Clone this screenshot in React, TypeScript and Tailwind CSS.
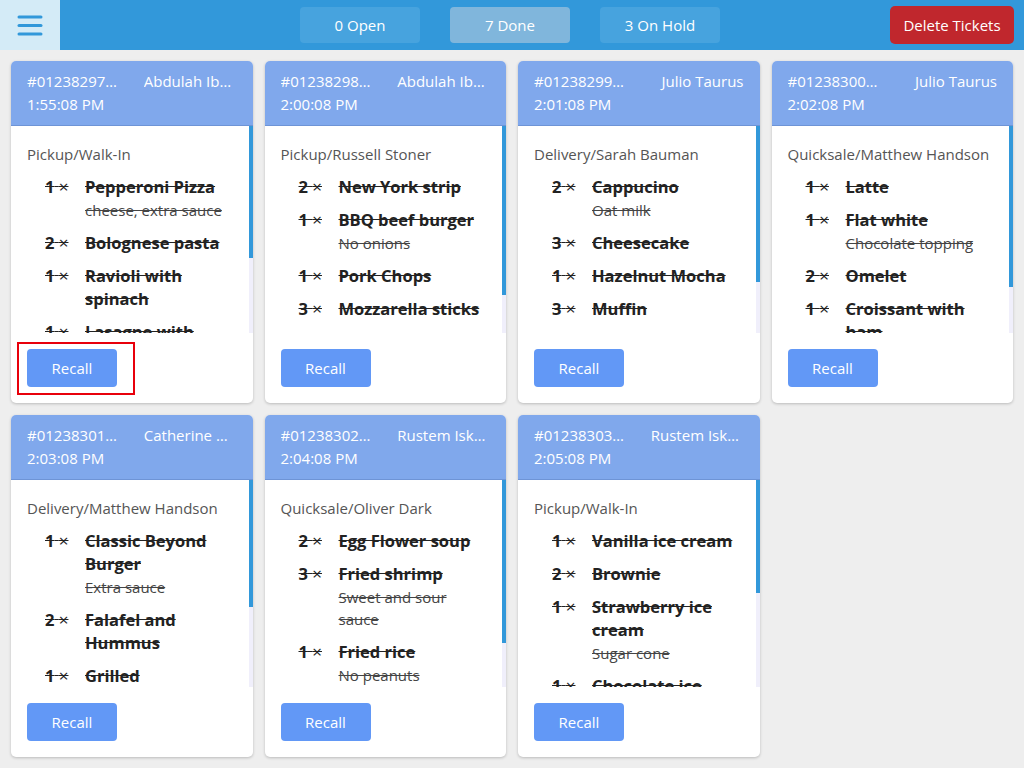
import React from 'react';

type Item = { qty: number; name: string; mods?: string };
type Ticket = { id: string; customer: string; time: string; kind: string; thumb: number; items: Item[] };

const tickets: Ticket[] = [
	{
		id: '#0123829701', customer: 'Abdulah Ibrahimov', time: '1:55:08 PM', kind: 'Pickup/Walk-In', thumb: 132,
		items: [
			{ qty: 1, name: 'Pepperoni Pizza', mods: 'cheese, extra sauce' },
			{ qty: 2, name: 'Bolognese pasta' },
			{ qty: 1, name: 'Ravioli with spinach' },
			{ qty: 1, name: 'Lasagne with meatballs', mods: 'Extra cheese' },
		],
	},
	{
		id: '#0123829802', customer: 'Abdulah Ibrahimov', time: '2:00:08 PM', kind: 'Pickup/Russell Stoner', thumb: 169,
		items: [
			{ qty: 2, name: 'New York strip' },
			{ qty: 1, name: 'BBQ beef burger', mods: 'No onions' },
			{ qty: 1, name: 'Pork Chops' },
			{ qty: 3, name: 'Mozzarella sticks' },
			{ qty: 1, name: 'Garlic bread' },
		],
	},
	{
		id: '#0123829903', customer: 'Julio Taurus', time: '2:01:08 PM', kind: 'Delivery/Sarah Bauman', thumb: 156,
		items: [
			{ qty: 2, name: 'Cappucino', mods: 'Oat milk' },
			{ qty: 3, name: 'Cheesecake' },
			{ qty: 1, name: 'Hazelnut Mocha' },
			{ qty: 3, name: 'Muffin' },
			{ qty: 1, name: 'Espresso' },
		],
	},
	{
		id: '#0123830004', customer: 'Julio Taurus', time: '2:02:08 PM', kind: 'Quicksale/Matthew Handson', thumb: 161,
		items: [
			{ qty: 1, name: 'Latte' },
			{ qty: 1, name: 'Flat white', mods: 'Chocolate topping' },
			{ qty: 2, name: 'Omelet' },
			{ qty: 1, name: 'Croissant with ham' },
		],
	},
	{
		id: '#0123830105', customer: 'Catherine Wood', time: '2:03:08 PM', kind: 'Delivery/Matthew Handson', thumb: 127,
		items: [
			{ qty: 1, name: 'Classic Beyond Burger', mods: 'Extra sauce' },
			{ qty: 2, name: 'Falafel and Hummus' },
			{ qty: 1, name: 'Grilled Mediterranean vegetables' },
			{ qty: 2, name: 'Lemonade' },
		],
	},
	{
		id: '#0123830206', customer: 'Rustem Iskakov', time: '2:04:08 PM', kind: 'Quicksale/Oliver Dark', thumb: 163,
		items: [
			{ qty: 2, name: 'Egg Flower soup' },
			{ qty: 3, name: 'Fried shrimp', mods: 'Sweet and sour sauce' },
			{ qty: 1, name: 'Fried rice', mods: 'No peanuts' },
			{ qty: 2, name: 'Spring rolls' },
		],
	},
	{
		id: '#0123830307', customer: 'Rustem Iskakov', time: '2:05:08 PM', kind: 'Pickup/Walk-In', thumb: 113,
		items: [
			{ qty: 1, name: 'Vanilla ice cream' },
			{ qty: 2, name: 'Brownie' },
			{ qty: 1, name: 'Strawberry ice cream', mods: 'Sugar cone' },
			{ qty: 1, name: 'Chocolate ice cream', mods: 'Sprinkles' },
			{ qty: 1, name: 'Banana split', mods: 'Extra whipped cream' },
		],
	},
];

function TopBar() {
	return (
		<div className="grid grid-cols-[1fr_auto_1fr] items-center h-[50px] bg-[#3298da]">
			<div>
				<button className="w-[60px] h-[50px] bg-[#d4ebf7] flex items-center justify-center">
					<svg width="26" height="22" viewBox="0 0 26 22">
						<g stroke="#3298da" strokeWidth="3" strokeLinecap="round">
							<line x1="2" y1="3" x2="24" y2="3" />
							<line x1="2" y1="11.5" x2="24" y2="11.5" />
							<line x1="2" y1="20" x2="24" y2="20" />
						</g>
					</svg>
				</button>
			</div>
			<div className="flex gap-[30px] -translate-x-[2px]">
				<button className="w-[120px] h-[36px] rounded-[4px] bg-[#47a3de] text-white text-[15px]">0 Open</button>
				<button className="w-[120px] h-[36px] rounded-[4px] bg-[#80b6dc] text-white text-[15px]">7 Done</button>
				<button className="w-[120px] h-[36px] rounded-[4px] bg-[#47a3de] text-white text-[15px]">3 On Hold</button>
			</div>
			<div className="flex justify-end pr-[10px]">
				<button className="w-[124px] h-[38px] rounded-[5px] bg-[#c0272d] text-white text-[15px]">Delete Tickets</button>
			</div>
		</div>
	);
}

function TicketCard({ ticket, marked }: { ticket: Ticket; marked?: boolean }) {
	return (
		<div className="flex flex-col h-[342px] bg-white rounded-[5px] overflow-hidden shadow-[0_1px_3px_rgba(0,0,0,0.22)]">
			<div className="bg-[#80a8ec] border-b border-[#6e94d6] px-4 pt-[9px] pb-[9px] text-white text-[15px] leading-[23px]">
				<div className="grid grid-cols-2 gap-6">
					<span className="truncate">{ticket.id}</span>
					<span className="truncate text-right">{ticket.customer}</span>
				</div>
				<div>{ticket.time}</div>
			</div>
			<div className="flex-1 min-h-0 flex">
				<div className="flex-1 min-w-0 overflow-hidden px-4 pt-[17px]">
					<p className="text-[15px] leading-[22px] text-[#555]">{ticket.kind}</p>
					<div className="mt-[10px] pl-[18px] space-y-[10px]">
						{ticket.items.map((it, i) => (
							<div key={i} className="flex">
								<span className="w-10 shrink-0 text-[16.5px] leading-[23px] font-bold text-[#222] line-through whitespace-nowrap">
									{it.qty}{'\u00a0'}<span className="font-normal text-[17px]">×</span>
								</span>
								<div className="min-w-0">
									<div className="text-[16.5px] leading-[23px] font-bold text-[#222] line-through">{it.name}</div>
									{it.mods && (
										<div className="mt-[1px] text-[15px] leading-[22px] text-[#444] line-through">{it.mods}</div>
									)}
								</div>
							</div>
						))}
					</div>
				</div>
				<div className="w-1 shrink-0 bg-[#f0effb]">
					<div className="bg-[#3298da]" style={{ height: ticket.thumb }} />
				</div>
			</div>
			<div className="p-4">
				<div className="relative w-[90px]">
					<button className="w-[90px] h-[38px] rounded-[4px] bg-[#6298f6] text-white text-[15px]">Recall</button>
					{marked && (
						<span className="absolute -left-[10px] -top-[7px] w-[118px] h-[53px] border-2 border-[#e8000b] pointer-events-none" />
					)}
				</div>
			</div>
		</div>
	);
}

export default function App() {
	return (
		<div className="min-h-screen bg-[#eeeeee] font-['Open_Sans',sans-serif]">
			<TopBar />
			<div className="grid grid-cols-4 gap-3 p-[11px]">
				{tickets.map((t, i) => (
					<TicketCard key={t.id} ticket={t} marked={i === 0} />
				))}
			</div>
		</div>
	);
}
